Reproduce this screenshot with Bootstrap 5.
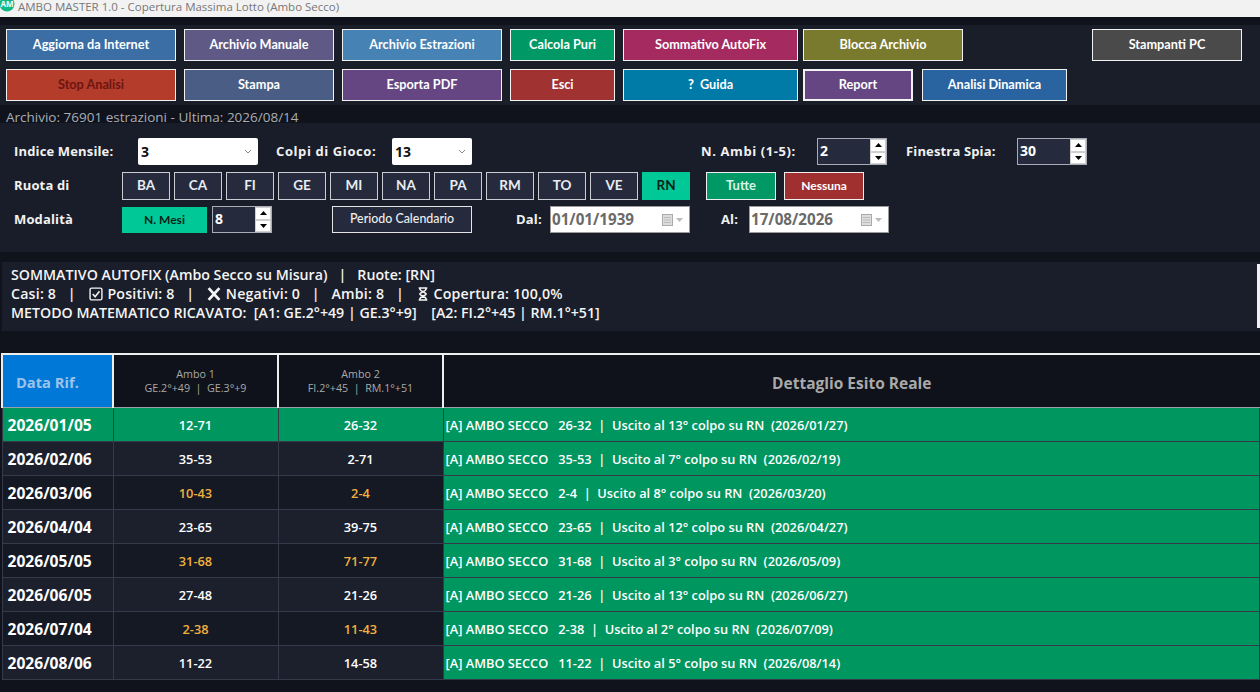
<!DOCTYPE html>
<html lang="it">
<head>
    <meta charset="UTF-8">
    <title>AMBO MASTER 1.0 - Copertura Massima Lotto (Ambo Secco)</title>
    <link href="https://cdn.jsdelivr.net/npm/bootstrap@5.3.2/dist/css/bootstrap.min.css" rel="stylesheet">
    <style>
        html, body { height: 100%; overflow: hidden; }
        body { background: #10131c; color: #fff; font-family: "Open Sans", "Noto Sans", sans-serif; font-size: 13px; }

        .titolo { height: 17px; background: #f2f2f2; color: #777; font-size: 11.5px; line-height: 13px; padding-left: 18px; overflow: hidden; position: relative; }
        .titolo svg { position: absolute; left: -1px; top: -4px; }

        .barra { margin-top: 8px; height: 80px; background: #191e29; padding: 4px 6px; }
        .fila-btn { height: 32px; gap: 8px; margin-bottom: 8px; }
        .cmd { border: 1px solid #f2f2f2; border-radius: 0; color: #fff; font-family: Lato, sans-serif; font-weight: 700; font-size: 12.7px; padding: 0; flex: none; height: 32px; }
        .cmd:hover { color: #fff; }
        .w170 { width: 170px; } .w150 { width: 150px; } .w160 { width: 160px; }
        .w105 { width: 105px; } .w175 { width: 175px; } .w110 { width: 110px; } .w145 { width: 145px; }

        .stato { height: 18px; line-height: 18px; padding: 3px 0 0 6px; color: #a9adb5; font-size: 13.5px; }

        .pannello { height: 129px; background: #191d29; padding: 15px 14px 0; }
        .riga { height: 27px; margin-bottom: 7px; }
        .etic { font-weight: 700; font-size: 13px; letter-spacing: .15px; color: #f1f1f1; flex: none; }
        .largo { letter-spacing: .6px; }
        .e108 { width: 108px; }
        .e104 { width: 104px; }
        .sel { width: 120px; height: 27px; border-radius: 2px; border: 0; font-weight: 700; font-size: 14px; color: #111; padding: 2px 3px; background-position: right 4px center; background-size: 12px 10px; --bs-form-select-bg-img: url("data:image/svg+xml,%3csvg xmlns='http://www.w3.org/2000/svg' viewBox='0 0 12 10'%3e%3cpath fill='none' stroke='%23888' d='M3 3l3 3 3-3'/%3e%3c/svg%3e"); }
        .sel80 { width: 80px; }
        .spin { height: 27px; background: #252b3d; border: 1px solid #a8acb6; color: #fff; font-weight: 700; font-size: 14px; padding-left: 2px; line-height: 24px; }
        .frecce { width: 16px; height: 25px; background: #fff; margin-left: auto; }
        .frecce span { flex: 1; border: 1px solid #cfcfcf; display: flex; align-items: center; justify-content: center; }
        .frecce svg { display: block; }
        .ruota { width: 48px; height: 28px; background: #252b3d; border: 1px solid #c9ccd3; border-radius: 0; color: #e9ecf2; font-family: Lato, sans-serif; font-weight: 700; font-size: 13.5px; padding: 0; flex: none; }
        .ruota-on { background: #00c896; border-color: #00c896; color: #06231b; }
        .tutte { width: 70px; background: #009966; border-color: #f0f0f0; color: #d6f3e8; font-size: 13px; }
        .nessuna { width: 80px; background: #a03030; border-color: #f0f0f0; color: #fff; font-size: 12px; }
        .mesi { width: 85px; height: 26px; background: #00c896; border: 0; border-radius: 0; color: #06231b; font-family: Lato, sans-serif; font-weight: 700; font-size: 12px; padding: 0; flex: none; }
        .periodo { width: 140px; height: 27px; background: #252b3d; border: 1px solid #e4e4e4; border-radius: 0; color: #eee; font-family: Lato, sans-serif; font-size: 12.4px; font-weight: 500; padding: 0; flex: none; }
        .data { width: 140px; height: 27px; background: #fff; border: 1px solid #9a9a9a; color: #6a6a6a; font-weight: 700; font-size: 15.2px; padding-left: 1px; line-height: 25px; flex: none; }

        .somma { height: 69px; margin: 10px 0 0 2px; background: #1a1e2a; padding: 3px 0 3px 9px; font-weight: 600; font-size: 14.2px; line-height: 19px; color: #f4f4f4; }
        .somma-testo div { white-space: pre; }
        .somma-testo .conti { letter-spacing: .2px; }
        .somma svg { vertical-align: -2px; }
        .striscia { width: 3px; height: 64px; margin-top: -1px; background: #f0f0f5; }

        .tab-wrap { margin: 22px 0 0 1px; }
        .esiti { table-layout: fixed; width: 1259px; margin: 0; border-collapse: collapse; --bs-table-bg: transparent; --bs-table-color: #fff; color: #fff; }
        .esiti th, .esiti td { padding: 3px 0 0; vertical-align: middle; height: 34px; border: 1px solid #343a4a; background: transparent; color: inherit; box-shadow: none; }
        .esiti thead th { height: 53px; padding: 0; background: #0f121a; border-top: 2px solid #eee; border-bottom: 1px solid #9aa0a6; border-left: 2px solid #eee; border-right: 0; text-align: center; color: #a9a9a9; font-size: 10.7px; font-weight: 500; line-height: 14px; }
        .esiti thead th.th-data { background: #0078d7; color: #9cc3ea; font-size: 14.7px; font-weight: 700; text-align: left; padding: 2px 0 0 13px; }
        .esiti thead th.th-det { font-size: 15.5px; font-weight: 700; padding-top: 4px; }
        .esiti td { text-align: center; font-size: 12.8px; font-weight: 600; }
        .esiti td.gg { text-align: left; padding-left: 5px; font-size: 15.6px; font-weight: 700; }
        .esiti td.det { text-align: left; padding-left: 2px; background: #009660; font-size: 12.8px; font-weight: 600; white-space: pre; }
        .esiti tr.chiara td { background: #1c202d; }
        .esiti tr.scura td { background: #151923; }
        .esiti tr.verde td { background: #009660; }
        .esiti tr td.det { background: #009660; }
        .esiti td.oro { color: #f0b040; }
    </style>
</head>
<body>
<div class="titolo">
    <svg width="16" height="16" viewBox="0 0 16 16"><circle cx="8" cy="8" r="7.5" fill="#12b886"/><text x="8" y="11" text-anchor="middle" font-size="8" font-weight="700" fill="#fff">AM</text></svg>
    AMBO MASTER 1.0 - Copertura Massima Lotto (Ambo Secco)
</div>

<div class="barra">
    <div class="d-flex fila-btn">
        <button class="btn cmd w170" style="background:#3a6ea5">Aggiorna da Internet</button>
        <button class="btn cmd w150" style="background:#5f5a85">Archivio Manuale</button>
        <button class="btn cmd w160" style="background:#4682b4">Archivio Estrazioni</button>
        <button class="btn cmd w105" style="background:#009966">Calcola Puri</button>
        <button class="btn cmd w175" style="background:#a52a5f">Sommativo AutoFix</button>
        <button class="btn cmd w160" style="margin-left:-3px;background:#7a7a2e">Blocca Archivio</button>
        <button class="btn cmd w150 ms-auto" style="margin-right:12px;background:#4a4a4a">Stampanti PC</button>
    </div>
    <div class="d-flex fila-btn">
        <button class="btn cmd w170" style="background:#b33c2a;color:#6e1512">Stop Analisi</button>
        <button class="btn cmd w150" style="background:#4a5d85">Stampa</button>
        <button class="btn cmd w160" style="background:#654682">Esporta PDF</button>
        <button class="btn cmd w105" style="background:#a03232">Esci</button>
        <button class="btn cmd w175" style="background:#007ba7"><b>?</b>&nbsp; Guida</button>
        <button class="btn cmd w110" style="margin-left:-3px;background:#654682;border-width:2px">Report</button>
        <button class="btn cmd w145" style="margin-left:1px;background:#2a64a0">Analisi Dinamica</button>
    </div>
</div>

<div class="stato">Archivio: 76901 estrazioni - Ultima: 2026/08/14</div>

<div class="pannello">
    <div class="d-flex align-items-center riga">
        <span class="etic e108">Indice Mensile:</span>
        <select class="form-select sel ms-3"><option>3</option></select>
        <span class="etic largo" style="margin-left:18px;width:116px">Colpi di Gioco:</span>
        <select class="form-select sel sel80"><option>13</option></select>
        <span class="etic largo" style="margin-left:229px;width:116px">N. Ambi (1-5):</span>
        <div class="spin d-flex" style="width:70px">2<div class="frecce d-flex flex-column"><span><svg width="7" height="4"><path d="M0 4L3.5 0 7 4z"/></svg></span><span><svg width="7" height="4"><path d="M0 0L3.5 4 7 0z"/></svg></span></div></div>
        <span class="etic" style="margin-left:19px;width:111px">Finestra Spia:</span>
        <div class="spin d-flex" style="width:70px">30<div class="frecce d-flex flex-column"><span><svg width="7" height="4"><path d="M0 4L3.5 0 7 4z"/></svg></span><span><svg width="7" height="4"><path d="M0 0L3.5 4 7 0z"/></svg></span></div></div>
    </div>
    <div class="d-flex align-items-center gap-1 riga">
        <span class="etic e104">Ruota di</span>
        <button class="btn ruota">BA</button>
        <button class="btn ruota">CA</button>
        <button class="btn ruota">FI</button>
        <button class="btn ruota">GE</button>
        <button class="btn ruota">MI</button>
        <button class="btn ruota">NA</button>
        <button class="btn ruota">PA</button>
        <button class="btn ruota">RM</button>
        <button class="btn ruota">TO</button>
        <button class="btn ruota">VE</button>
        <button class="btn ruota ruota-on">RN</button>
        <button class="btn ruota tutte" style="margin-left:12px">Tutte</button>
        <button class="btn ruota nessuna" style="margin-left:4px">Nessuna</button>
    </div>
    <div class="d-flex align-items-center riga">
        <span class="etic e108">Modalità</span>
        <button class="btn mesi">N. Mesi</button>
        <div class="spin d-flex" style="width:60px;margin-left:5px">8<div class="frecce d-flex flex-column"><span><svg width="7" height="4"><path d="M0 4L3.5 0 7 4z"/></svg></span><span><svg width="7" height="4"><path d="M0 0L3.5 4 7 0z"/></svg></span></div></div>
        <button class="btn periodo" style="margin-left:60px">Periodo Calendario</button>
        <span class="etic" style="margin-left:44px;width:34px">Dal:</span>
        <div class="data d-flex align-items-center">01/01/1939<svg class="ms-auto" style="margin-right:4px" width="24" height="14" viewBox="0 0 24 14"><rect x="1.500" y="1.500" width="10" height="11" fill="#ddd" stroke="#aaa"/><path d="M3 4.500h7M3 7h7M3 9.500h7" stroke="#bbb"/><path d="M15 5h7l-3.500 4z" fill="#bbb"/></svg></div>
        <span class="etic" style="margin-left:31px;width:28px">Al:</span>
        <div class="data d-flex align-items-center">17/08/2026<svg class="ms-auto" style="margin-right:4px" width="24" height="14" viewBox="0 0 24 14"><rect x="1.500" y="1.500" width="10" height="11" fill="#ddd" stroke="#aaa"/><path d="M3 4.500h7M3 7h7M3 9.500h7" stroke="#bbb"/><path d="M15 5h7l-3.500 4z" fill="#bbb"/></svg></div>
    </div>
</div>

<div class="somma d-flex justify-content-between">
    <div class="somma-testo">
        <div>SOMMATIVO AUTOFIX (Ambo Secco su Misura)   |   Ruote: [RN]</div>
        <div class="conti">Casi: 8   |   <svg width="16" height="14" viewBox="0 0 14 13"><rect x="1.500" y="1" width="11" height="11" rx="1.500" fill="none" stroke="#f4f4f4" stroke-width="1.300"/><path d="M4 6.500l2.200 2.500 4-5" fill="none" stroke="#f4f4f4" stroke-width="1.500"/></svg> Positivi: 8   |   <svg width="16" height="14" viewBox="0 0 14 13"><path d="M2 1l10 11M12 1L2 12" stroke="#f4f4f4" stroke-width="2.600"/></svg> Negativi: 0   |   Ambi: 8   |   <svg width="14" height="14" viewBox="0 0 12 13"><path d="M2 1h8M2 12h8M3 1.500c0 3 6 3.500 6 5s-6 2-6 5M9 1.500c0 3-6 3.500-6 5s6 2 6 5" fill="none" stroke="#f4f4f4" stroke-width="1.400"/></svg> Copertura: 100,0%</div>
        <div>METODO MATEMATICO RICAVATO:  [A1: GE.2°+49 | GE.3°+9]    [A2: FI.2°+45 | RM.1°+51]</div>
    </div>
    <div class="striscia"></div>
</div>

<div class="tab-wrap">
    <table class="table esiti">
        <colgroup>
            <col style="width:111px"><col style="width:165px"><col style="width:165px"><col>
        </colgroup>
        <thead>
            <tr>
                <th class="th-data">Data Rif.</th>
                <th>Ambo 1<br>GE.2°+49 &nbsp;|&nbsp; GE.3°+9</th>
                <th>Ambo 2<br>FI.2°+45 &nbsp;|&nbsp; RM.1°+51</th>
                <th class="th-det">Dettaglio Esito Reale</th>
            </tr>
        </thead>
        <tbody>
            <tr class="verde"><td class="gg">2026/01/05</td><td>12-71</td><td>26-32</td><td class="det">[A] AMBO SECCO   26-32  |  Uscito al 13° colpo su RN  (2026/01/27)</td></tr>
            <tr class="chiara"><td class="gg">2026/02/06</td><td>35-53</td><td>2-71</td><td class="det">[A] AMBO SECCO   35-53  |  Uscito al 7° colpo su RN  (2026/02/19)</td></tr>
            <tr class="scura"><td class="gg">2026/03/06</td><td class="oro">10-43</td><td class="oro">2-4</td><td class="det">[A] AMBO SECCO   2-4  |  Uscito al 8° colpo su RN  (2026/03/20)</td></tr>
            <tr class="chiara"><td class="gg">2026/04/04</td><td>23-65</td><td>39-75</td><td class="det">[A] AMBO SECCO   23-65  |  Uscito al 12° colpo su RN  (2026/04/27)</td></tr>
            <tr class="scura"><td class="gg">2026/05/05</td><td class="oro">31-68</td><td class="oro">71-77</td><td class="det">[A] AMBO SECCO   31-68  |  Uscito al 3° colpo su RN  (2026/05/09)</td></tr>
            <tr class="chiara"><td class="gg">2026/06/05</td><td>27-48</td><td>21-26</td><td class="det">[A] AMBO SECCO   21-26  |  Uscito al 13° colpo su RN  (2026/06/27)</td></tr>
            <tr class="scura"><td class="gg">2026/07/04</td><td class="oro">2-38</td><td class="oro">11-43</td><td class="det">[A] AMBO SECCO   2-38  |  Uscito al 2° colpo su RN  (2026/07/09)</td></tr>
            <tr class="chiara"><td class="gg">2026/08/06</td><td>11-22</td><td>14-58</td><td class="det">[A] AMBO SECCO   11-22  |  Uscito al 5° colpo su RN  (2026/08/14)</td></tr>
        </tbody>
    </table>
</div>

<script src="https://cdn.jsdelivr.net/npm/bootstrap@5.3.2/dist/js/bootstrap.bundle.min.js"></script>
</body>
</html>
